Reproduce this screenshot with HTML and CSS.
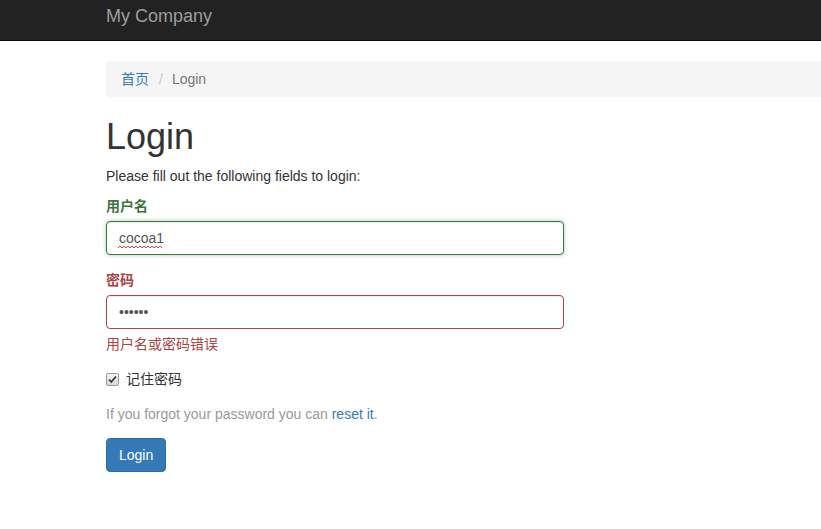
FILE: index.html
```html
<!DOCTYPE html>
<html lang="zh-CN">
<head>
<meta charset="utf-8">
<title>Login</title>
<link rel="stylesheet" href="styles.css">
</head>
<body>
<nav class="navbar">
  <div class="container">
    <a class="navbar-brand" href="#">My Company</a>
  </div>
</nav>
<div class="wrap">
  <div class="container">
    <ul class="breadcrumb">
      <li><a href="#">首页</a></li>
      <li class="active">Login</li>
    </ul>
    <div class="site-login">
      <h1>Login</h1>
      <p>Please fill out the following fields to login:</p>
      <div class="row">
        <div class="col">
          <form>
            <div class="form-group has-success">
              <label class="control-label">用户名</label>
              <div class="input-wrap">
                <input type="text" class="form-control" value="cocoa1" spellcheck="false">
                <svg class="squiggle" width="44" height="4" viewBox="0 0 44 4"><path d="M0 3 L2 1 L4 3 L6 1 L8 3 L10 1 L12 3 L14 1 L16 3 L18 1 L20 3 L22 1 L24 3 L26 1 L28 3 L30 1 L32 3 L34 1 L36 3 L38 1 L40 3 L42 1 L44 3" fill="none" stroke="#e23b3b" stroke-width="1"/></svg>
              </div>
            </div>
            <div class="form-group has-error">
              <label class="control-label">密码</label>
              <input type="password" class="form-control" value="123456">
              <p class="help-block">用户名或密码错误</p>
            </div>
            <div class="form-group">
              <div class="checkbox">
                <label>
                  <span class="check-box"><svg width="13" height="13" viewBox="0 0 13 13"><path d="M3 6.5 L5.3 9 L10 3.5" fill="none" stroke="#333" stroke-width="1.8"/></svg></span>
                  记住密码
                </label>
              </div>
            </div>
            <div class="forgot">
              If you forgot your password you can <a href="#">reset it</a>.
            </div>
            <div class="form-group">
              <button type="button" class="btn btn-primary">Login</button>
            </div>
          </form>
        </div>
      </div>
    </div>
  </div>
</div>
</body>
</html>
```
FILE: styles.css
```css
html, body {
  margin: 0;
  padding: 0;
  overflow: hidden;
}
body {
  font-family: "Liberation Sans", Arial, "Noto Sans CJK SC", sans-serif;
  font-size: 14px;
  line-height: 20px;
  color: #333;
  background: #fff;
}
a {
  color: #337ab7;
  text-decoration: none;
}
.container {
  width: 1170px;
  margin-left: 91px;
  padding: 0 15px;
  box-sizing: border-box;
}
.navbar {
  background: #222;
  border-bottom: 1px solid #080808;
  height: 40px;
}
.navbar-brand {
  display: block;
  float: left;
  color: #9d9d9d;
  font-size: 18px;
  line-height: 20px;
  padding: 6px 0;
}
.wrap {
  padding-top: 20px;
}
.breadcrumb {
  list-style: none;
  margin: 0 0 20px;
  padding: 8px 15px;
  background: #f5f5f5;
  border-radius: 4px;
  display: flex;
}
.breadcrumb li + li::before {
  content: "/";
  color: #ccc;
  padding: 0 9px 0 10px;
}
.breadcrumb .active {
  color: #777;
}
h1 {
  font-size: 36px;
  font-weight: 500;
  line-height: 39px;
  margin: 20px 0 10px;
}
p {
  margin: 0 0 10px;
}
.col {
  width: 457.5px;
}
form {
  margin: 0;
}
.form-group {
  margin-bottom: 15px;
}
.control-label {
  display: inline-block;
  font-weight: bold;
  margin-bottom: 5px;
}
.input-wrap {
  position: relative;
}
.squiggle {
  position: absolute;
  left: 12px;
  top: 24px;
}
.form-control {
  display: block;
  width: 100%;
  height: 34px;
  box-sizing: border-box;
  padding: 6px 12px;
  font-family: "Liberation Sans", Arial, "Noto Sans CJK SC", sans-serif;
  font-size: 14px;
  line-height: 20px;
  color: #555;
  background: #fff;
  border: 1px solid #ccc;
  border-radius: 4px;
  box-shadow: inset 0 1px 1px rgba(0,0,0,.075);
  outline: none;
  margin: 0;
}
.has-success .control-label { color: #3c763d; }
.has-success .form-control {
  border-color: #3c763d;
  box-shadow: inset 0 1px 1px rgba(0,0,0,.075), 0 0 4px rgba(103,177,104,.6);
}
.has-error .control-label { color: #a94442; }
.has-error .form-control { border-color: #a94442; }
.help-block {
  display: block;
  margin: 5px 0 10px;
  color: #a94442;
}
.checkbox {
  margin: 10px 0;
}
.checkbox label {
  display: flex;
  align-items: center;
  min-height: 20px;
  font-weight: normal;
}
.check-box {
  display: inline-block;
  width: 11px;
  height: 11px;
  border: 1px solid #9a9a9a;
  border-radius: 2px;
  background: linear-gradient(#f4f4f4, #d8d8d8);
  margin-right: 7px;
  position: relative;
}
.check-box svg {
  position: absolute;
  left: -1px;
  top: -1px;
}
.forgot {
  color: #999;
  margin: 14px 0;
}
.btn {
  display: inline-block;
  padding: 6px 12px;
  font-family: "Liberation Sans", Arial, sans-serif;
  font-size: 14px;
  line-height: 20px;
  border: 1px solid transparent;
  border-radius: 4px;
  cursor: pointer;
}
.btn-primary {
  color: #fff;
  background: #337ab7;
  border-color: #2e6da4;
}
```
